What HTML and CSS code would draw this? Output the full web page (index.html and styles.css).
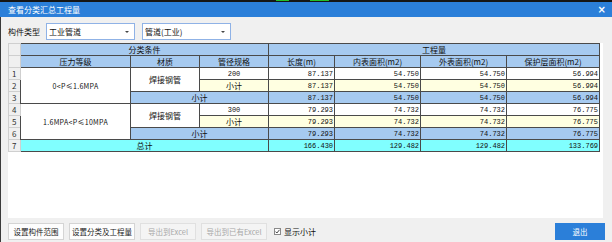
FILE: index.html
```html
<!DOCTYPE html>
<html lang="zh-CN">
<head>
    <meta charset="UTF-8">
    <title>查看分类汇总工程量</title>
    <link rel="stylesheet" href="styles.css">
</head>
<body>
    <div class="topstrip"><span class="mark m1"></span><span class="mark m2"></span></div>
    <div class="titlebar">
        <span class="title">查看分类汇总工程量</span>
        <span class="close">×</span>
    </div>
    <div class="content">
        <div class="filter">
            <span class="label">构件类型</span>
            <div class="combo"><span>工业管道</span><i class="arrow"></i></div>
            <div class="combo"><span>管道(工业)</span><i class="arrow"></i></div>
        </div>

        <div class="grid">
            <table>
                <colgroup>
                    <col style="width:12px"><col style="width:110px"><col style="width:69px"><col style="width:69px">
                    <col style="width:66px"><col style="width:86px"><col style="width:86px"><col style="width:93px">
                </colgroup>
                <tr>
                    <td class="rh"></td>
                    <td class="hd" colspan="3">分类条件</td>
                    <td class="hd" colspan="4">工程量</td>
                </tr>
                <tr>
                    <td class="rh"></td>
                    <td class="hd">压力等级</td>
                    <td class="hd">材质</td>
                    <td class="hd">管径规格</td>
                    <td class="hd">长度(m)</td>
                    <td class="hd">内表面积(m2)</td>
                    <td class="hd">外表面积(m2)</td>
                    <td class="hd">保护层面积(m2)</td>
                </tr>
                <tr>
                    <td class="rh">1</td>
                    <td class="cond" rowspan="3">0&lt;P≤1.6MPA</td>
                    <td rowspan="2">焊接钢管</td>
                    <td class="spec">200</td>
                    <td class="num">87.137</td><td class="num">54.750</td><td class="num">54.750</td><td class="num">56.994</td>
                </tr>
                <tr class="yel">
                    <td class="rh">2</td>
                    <td>小计</td>
                    <td class="num">87.137</td><td class="num">54.750</td><td class="num">54.750</td><td class="num">56.994</td>
                </tr>
                <tr class="sub">
                    <td class="rh">3</td>
                    <td colspan="2">小计</td>
                    <td class="num">87.137</td><td class="num">54.750</td><td class="num">54.750</td><td class="num">56.994</td>
                </tr>
                <tr>
                    <td class="rh">4</td>
                    <td class="cond" rowspan="3">1.6MPA&lt;P≤10MPA</td>
                    <td rowspan="2">焊接钢管</td>
                    <td class="spec">300</td>
                    <td class="num">79.293</td><td class="num">74.732</td><td class="num">74.732</td><td class="num">76.775</td>
                </tr>
                <tr class="yel">
                    <td class="rh">5</td>
                    <td>小计</td>
                    <td class="num">79.293</td><td class="num">74.732</td><td class="num">74.732</td><td class="num">76.775</td>
                </tr>
                <tr class="sub">
                    <td class="rh">6</td>
                    <td colspan="2">小计</td>
                    <td class="num">79.293</td><td class="num">74.732</td><td class="num">74.732</td><td class="num">76.775</td>
                </tr>
                <tr class="tot">
                    <td class="rh">7</td>
                    <td colspan="3">总计</td>
                    <td class="num">166.430</td><td class="num">129.482</td><td class="num">129.482</td><td class="num">133.769</td>
                </tr>
            </table>
        </div>

        <div class="footer">
            <button class="btn w56">设置构件范围</button>
            <button class="btn w66">设置分类及工程量</button>
            <button class="btn w56" disabled>导出到Excel</button>
            <button class="btn w66" disabled>导出到已有Excel</button>
            <label class="check">
                <svg width="7" height="7" viewBox="0 0 7 7"><rect x="0.5" y="0.5" width="6" height="6" fill="#fff" stroke="#8a8a8a"/><path d="M1.5 3.6 L2.9 5 L5.5 1.8" fill="none" stroke="#333" stroke-width="0.9"/></svg>
                <span>显示小计</span>
            </label>
            <button class="btn quit">退出</button>
        </div>
    </div>
</body>
</html>
```

FILE: styles.css
```css
body {
    margin: 0;
    width: 612px;
    height: 242px;
    overflow: hidden;
    background-color: #f0f0f0;
    font-family: "Noto Sans CJK SC", sans-serif;
    font-size: 8px;
    color: #111;
}

.topstrip {
    display: flex;
    height: 2px;
    background-color: #151515;
}

.mark {
    height: 1px;
    background-color: #22c02a;
}

.m1 {
    margin-left: 276px;
    width: 13px;
}

.m2 {
    margin-left: 21px;
    width: 19px;
}

.titlebar {
    display: flex;
    align-items: center;
    justify-content: space-between;
    height: 15px;
    padding: 0 6px 0 8px;
    background-color: #2b7fd9;
    color: white;
}

.close {
    font-family: "DejaVu Sans", sans-serif;
    font-size: 10px;
    font-weight: bold;
}

.content {
    display: flex;
    flex-direction: column;
    height: 225px;
    padding: 6px 9px 0 7px;
    border-left: 1px solid #3a3a3a;
    box-sizing: border-box;
}

.filter {
    display: flex;
    align-items: center;
    height: 17px;
}

.label {
    width: 38px;
}

.combo {
    position: relative;
    display: flex;
    align-items: center;
    width: 89px;
    height: 17px;
    margin-right: 7px;
    padding-left: 2px;
    box-sizing: border-box;
    border: 1px solid #8fb2e6;
    background-color: white;
}

.arrow {
    position: absolute;
    right: 5px;
    top: 7px;
    border-left: 2px solid transparent;
    border-right: 2px solid transparent;
    border-top: 2px solid #444;
}

.grid {
    height: 175px;
    margin-top: 3px;
    background-color: white;
}

table {
    width: 591px;
    border-collapse: collapse;
    table-layout: fixed;
}

td {
    height: 11px;
    padding: 0 1px;
    border: 1px solid #4a4a4a;
    line-height: 10px;
    text-align: center;
    white-space: nowrap;
    overflow: hidden;
}

td.rh {
    padding-left: 3px;
    text-align: left;
    background-color: #f0f0f0;
    border-color: #cfcfcf;
    color: #333;
}

td.hd {
    background-color: #a6caf0;
}

td.cond {
    font-size: 7px;
    letter-spacing: 0.3px;
}

td.spec {
    font-family: "Liberation Mono", monospace;
    font-size: 7px;
}

td.num {
    text-align: right;
    font-family: "Liberation Mono", monospace;
    font-size: 7px;
}

.yel td {
    background-color: #ffffe1;
}

.sub td {
    background-color: #a6caf0;
}

.tot td {
    background-color: #80ffff;
}

.yel td.rh,
.sub td.rh,
.tot td.rh {
    background-color: #f0f0f0;
}

.footer {
    display: flex;
    align-items: center;
    gap: 5px;
    height: 17px;
    margin-top: 5px;
    margin-right: -2px;
}

.btn {
    height: 17px;
    padding: 0;
    border: 1px solid #d4d4d4;
    background-color: #fdfdfd;
    font-family: inherit;
    font-size: 7.5px;
    color: #222;
}

.btn:disabled {
    background-color: #f4f4f4;
    border-color: #e0e0e0;
    color: #a8a8a8;
}

.w56 {
    width: 56px;
}

.w66 {
    width: 66px;
}

.check {
    display: flex;
    align-items: center;
    gap: 3px;
    margin-left: 2px;
}

.quit {
    width: 50px;
    margin-left: auto;
    background-color: #2b7fd9;
    border-color: #2b7fd9;
    color: white;
}
```
